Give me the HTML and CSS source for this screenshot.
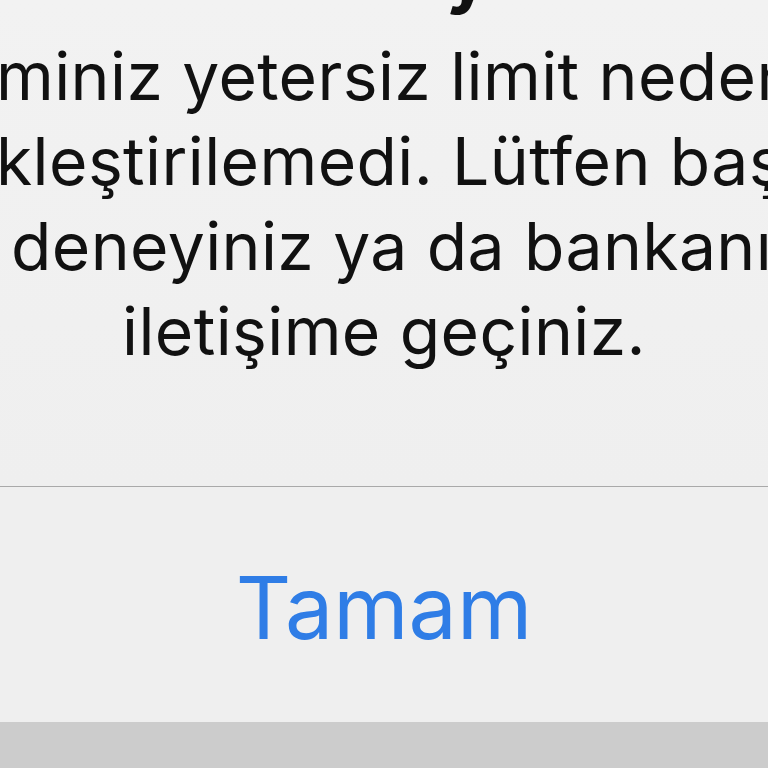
FILE: index.html
```html
<!DOCTYPE html>
<html lang="tr">
<head>
<meta charset="utf-8">
<link rel="stylesheet" href="styles.css">
</head>
<body>
<div class="alert">
  <div class="content">
    <div class="title"><span class="title-y">y</span></div>
    <div class="message">
      <div class="line line-1">miniz yetersiz limit nedeniyle</div>
      <div class="line line-2">kleştirilemedi. Lütfen başka</div>
      <div class="line line-3">deneyiniz ya da bankanız ile</div>
      <div class="line line-4">iletişime geçiniz.</div>
    </div>
  </div>
  <div class="divider"></div>
  <div class="action">
    <span class="button">Tamam</span>
  </div>
</div>
</body>
</html>
```
FILE: styles.css
```css
html, body {
  margin: 0;
  padding: 0;
  width: 768px;
  height: 768px;
  overflow: hidden;
  background: #cccccc;
  font-family: Inter, "Liberation Sans", sans-serif;
}
.alert {
  height: 722px;
  background: #efefef;
  display: flex;
  flex-direction: column;
}
.content {
  height: 486px;
  background: linear-gradient(#f2f2f2, #efefef);
  overflow: hidden;
}
.title {
  height: 16px;
  overflow: hidden;
  font-weight: 700;
  font-size: 72px;
  color: #111;
}
.title-y {
  display: block;
  margin-left: 446px;
  margin-top: -62px;
  line-height: 72px;
}
.message {
  display: flex;
  flex-direction: column;
  margin-top: 18px;
  color: #111;
  font-size: 66px;
  letter-spacing: 0.4px;
  line-height: 85px;
}
.line {
  white-space: nowrap;
}
.line-1 { margin-left: -4px; }
.line-2 { margin-left: -4px; }
.line-3 { margin-left: 11px; }
.line-4 { text-align: center; }
.divider {
  height: 1px;
  background: #a9a9a9;
}
.action {
  flex: 1;
  display: flex;
  align-items: center;
  justify-content: center;
  padding-top: 6px;
}
.button {
  color: #2f7de6;
  font-size: 86px;
  line-height: 1;
}
```
